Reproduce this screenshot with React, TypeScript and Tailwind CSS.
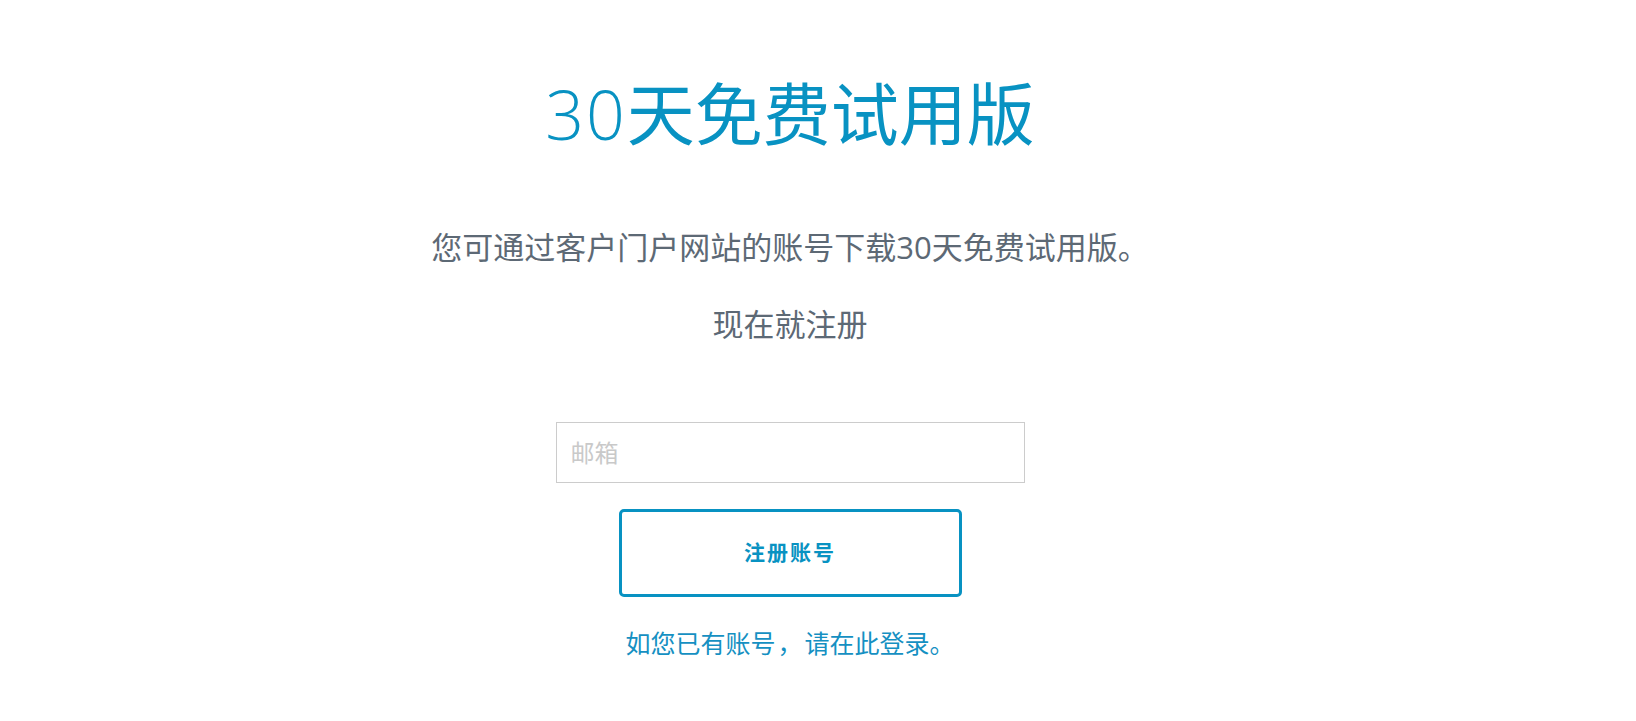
export default function App() {
  return (
    <div
      className="flex min-h-[721px] flex-col items-center bg-white pr-[56px] text-center"
      style={{ fontFamily: '"Open Sans", "Noto Sans CJK SC", sans-serif' }}
    >
      <h1 className="mt-[80px] text-[68px] leading-none font-normal text-[#0892c2]">
        <span className="font-light tracking-[2px]">30</span>天免费试用版
      </h1>

      <p className="mt-[84px] text-[31px] leading-none text-[#5d6975]">
        您可通过客户门户网站的账号下载30天免费试用版。
      </p>
      <p className="mt-[46px] text-[31px] leading-none text-[#5d6975]">现在就注册</p>

      <input
        type="email"
        placeholder="邮箱"
        className="mt-[82px] h-[61px] w-[469px] border border-[#cccccc] px-[14px] text-[24px] text-[#333] outline-none placeholder:text-[#c9c9c9]"
      />

      <button className="mt-[26px] flex h-[88px] w-[343px] items-center justify-center rounded-[5px] border-[3px] border-[#0892c2] bg-white text-[21px] font-bold tracking-[2px] text-[#0892c2]">
        注册账号
      </button>

      <a href="#" className="mt-[34px] text-[25px] leading-none text-[#1590c2]">
        如您已有账号<span className="mx-[2px]">，</span>请在此登录。
      </a>
    </div>
  )
}
